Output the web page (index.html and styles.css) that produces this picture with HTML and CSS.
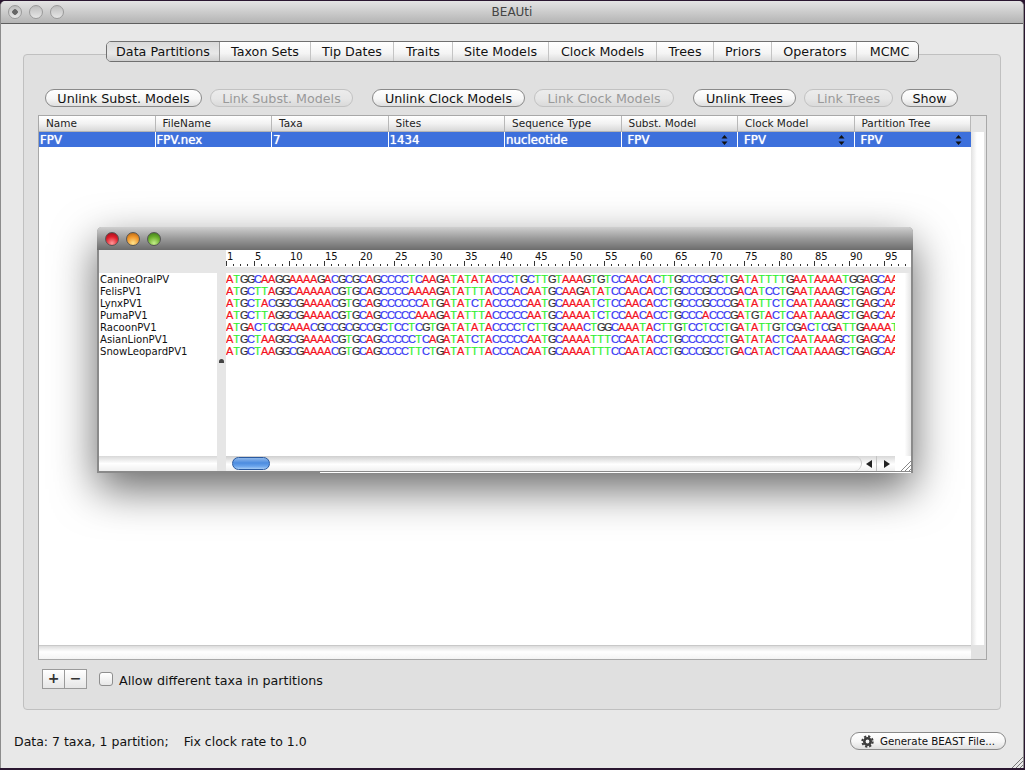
FILE: index.html

```html
<!DOCTYPE html>
<html lang="en">
<head>
  <meta charset="UTF-8" />
  <title>BEAUti</title>
  <link rel="stylesheet" href="styles.css">
</head>
<body>

  <div class="window">
    <div class="titlebar">
      <div class="lights">
        <span class="light light-close"></span>
        <span class="light"></span>
        <span class="light"></span>
      </div>
      <div class="title">BEAUti</div>
    </div>

    <div class="panel">
      <div class="tabs">
        <div class="tab tab-active tab-w1">Data Partitions</div>
        <div class="tab tab-w2">Taxon Sets</div>
        <div class="tab tab-w3">Tip Dates</div>
        <div class="tab tab-w4">Traits</div>
        <div class="tab tab-w5">Site Models</div>
        <div class="tab tab-w6">Clock Models</div>
        <div class="tab tab-w7">Trees</div>
        <div class="tab tab-w8">Priors</div>
        <div class="tab tab-w9">Operators</div>
        <div class="tab tab-w10">MCMC</div>
      </div>

      <div class="actions">
        <button class="btn btn-w1">Unlink Subst. Models</button>
        <button class="btn btn-off btn-w2">Link Subst. Models</button>
        <button class="btn btn-w3 group-start">Unlink Clock Models</button>
        <button class="btn btn-off btn-w4">Link Clock Models</button>
        <button class="btn btn-w5 group-start">Unlink Trees</button>
        <button class="btn btn-off btn-w6">Link Trees</button>
        <button class="btn btn-w7">Show</button>
      </div>

      <div class="table">
        <div class="table-list">
          <div class="table-head">
            <div class="th">Name</div>
            <div class="th">FileName</div>
            <div class="th">Taxa</div>
            <div class="th">Sites</div>
            <div class="th">Sequence Type</div>
            <div class="th">Subst. Model</div>
            <div class="th">Clock Model</div>
            <div class="th">Partition Tree</div>
          </div>
          <div class="table-row">
            <div class="td">FPV</div>
            <div class="td">FPV.nex</div>
            <div class="td">7</div>
            <div class="td">1434</div>
            <div class="td">nucleotide</div>
            <div class="td td-combo">FPV
              <svg class="stepper" width="7" height="12" viewBox="0 0 7 12"><path d="M3.5 1 L6.5 4.5 H0.5 Z M3.5 11 L0.5 7.5 H6.5 Z" fill="#111"/></svg>
            </div>
            <div class="td td-combo">FPV
              <svg class="stepper" width="7" height="12" viewBox="0 0 7 12"><path d="M3.5 1 L6.5 4.5 H0.5 Z M3.5 11 L0.5 7.5 H6.5 Z" fill="#111"/></svg>
            </div>
            <div class="td td-combo">FPV
              <svg class="stepper" width="7" height="12" viewBox="0 0 7 12"><path d="M3.5 1 L6.5 4.5 H0.5 Z M3.5 11 L0.5 7.5 H6.5 Z" fill="#111"/></svg>
            </div>
          </div>
        </div>
        <div class="table-vtrack"></div>
        <div class="table-htrack"></div>
        <div class="table-corner"></div>
      </div>

      <div class="table-tools">
        <div class="plus-minus">
          <div class="pm-btn">+</div>
          <div class="pm-btn">&minus;</div>
        </div>
        <span class="checkbox"></span>
        <span class="check-label">Allow different taxa in partitions</span>
      </div>
    </div>

    <div class="statusbar">
      <div class="status-text">Data: 7 taxa, 1 partition;<span class="status-gap">Fix clock rate to 1.0</span></div>
      <button class="btn btn-generate">
        <svg width="13" height="13" viewBox="0 0 13 13"><circle cx="6.5" cy="6.5" r="3.2" fill="none" stroke="#3c3c3c" stroke-width="2.6"/><circle cx="6.5" cy="6.5" r="5.2" fill="none" stroke="#3c3c3c" stroke-width="2" stroke-dasharray="2.2 1.88"/></svg>
        Generate BEAST File...
      </button>
    </div>
    <svg class="grip" width="12" height="12" viewBox="0 0 12 12"><path d="M12 1 L1 12 M12 5 L5 12 M12 9 L9 12" stroke="#777" fill="none"/></svg>
  </div>

  <div class="viewer">
    <div class="viewer-title">
      <span class="orb orb-red"></span>
      <span class="orb orb-amber"></span>
      <span class="orb orb-green"></span>
    </div>
    <div class="viewer-body">
      <div class="names-col">
        <div class="names">
          <div>CanineOralPV</div>
          <div>FelisPV1</div>
          <div>LynxPV1</div>
          <div>PumaPV1</div>
          <div>RacoonPV1</div>
          <div>AsianLionPV1</div>
          <div>SnowLeopardPV1</div>
        </div>
        <div class="names-foot"></div>
      </div>
      <div class="divider"><span class="divider-knob"></span></div>
      <div class="seq-col">
        <div class="ruler" id="ruler"></div>
        <div class="ruler-gap"></div>
        <div class="seq-area">
          <div class="seqs" id="seqs"></div>
          <div class="seq-vtrack"></div>
        </div>
        <div class="seq-foot">
          <div class="hscroll"><span class="thumb"></span></div>
          <div class="arrow-btn"><svg width="6" height="8" viewBox="0 0 6 8"><path d="M0 4 L6 0 V8 Z" fill="#222"/></svg></div>
          <div class="arrow-btn"><svg width="6" height="8" viewBox="0 0 6 8"><path d="M6 4 L0 0 V8 Z" fill="#222"/></svg></div>
          <div class="foot-corner">
            <svg width="11" height="11" viewBox="0 0 11 11"><path d="M11 1 L1 11 M11 5 L5 11 M11 9 L9 11" stroke="#888" fill="none"/></svg>
          </div>
        </div>
      </div>
    </div>
  </div>

  <script src="script.js"></script>
</body>
</html>
```

FILE: styles.css

```css
* {
  box-sizing: border-box;
}
html, body {
  margin: 0;
  height: 770px;
  overflow: hidden;
}
body {
  position: relative;
  background: #2a1630;
  font-family: 'DejaVu Sans', Verdana, sans-serif;
  color: #111;
}

/* main window */
.window {
  position: relative;
  width: 1024px;
  height: 767px;
  margin-top: 1px;
  background: #e8e8e8;
  border-left: 1px solid #8c8c8c;
  border-right: 1px solid #8c8c8c;
  border-radius: 5px 5px 0 0;
  display: flex;
  flex-direction: column;
}
.titlebar {
  height: 23px;
  flex: none;
  display: flex;
  align-items: center;
  background: linear-gradient(#e4e4e4, #b4b4b4);
  border-bottom: 1px solid #5e5e5e;
  border-radius: 5px 5px 0 0;
  padding-left: 7px;
}
.lights {
  display: flex;
  gap: 7px;
  width: 60px;
}
.light {
  width: 14px;
  height: 14px;
  border-radius: 50%;
  border: 1px solid #9a9a9a;
  background: linear-gradient(#bdbdbd, #e6e6e6);
}
.light-close {
  background: radial-gradient(circle, #666 0 2.5px, transparent 3px), linear-gradient(#bdbdbd, #e6e6e6);
}
.title {
  flex: 1;
  text-align: center;
  font-size: 12px;
  color: #444;
  padding-right: 67px;
}

/* tabbed panel */
.panel {
  margin: 30px 22px 0 22px;
  height: 656px;
  flex: none;
  background: #e0e0e0;
  border: 1px solid #c0c0c0;
  border-radius: 4px;
  padding: 0 13px 0 14px;
}
.tabs {
  display: flex;
  height: 21px;
  width: 813px;
  margin: -14px auto 0 auto;
  border: 1px solid #707070;
  border-radius: 5px;
  background: linear-gradient(#fff, #f4f4f4 60%, #dcdcdc);
  overflow: hidden;
}
.tab {
  font-size: 12.7px;
  line-height: 19px;
  text-align: center;
  border-right: 1px solid #c4c4c4;
}
.tab:last-child {
  border-right: none;
}
.tab-active {
  background: linear-gradient(#dadada, #e8e8e8 60%, #cfcfcf);
  border-right-color: #999;
}
.tab-w1 { width: 113px; }
.tab-w2 { width: 91px; }
.tab-w3 { width: 83px; }
.tab-w4 { width: 59px; }
.tab-w5 { width: 96px; }
.tab-w6 { width: 108px; }
.tab-w7 { width: 57px; }
.tab-w8 { width: 58px; padding-left: 1px; }
.tab-w9 { width: 85px; padding-left: 2px; }
.tab-w10 { width: 61px; padding-left: 4px; }

/* buttons */
.actions {
  display: flex;
  gap: 8px;
  margin: 27px 0 8px 7px;
}
.btn {
  height: 18px;
  padding: 0;
  font-family: inherit;
  font-size: 12.7px;
  line-height: 15px;
  color: #111;
  border: 1px solid #8a8a8a;
  border-radius: 9px;
  background: linear-gradient(#fff, #f6f6f6 55%, #dedede);
}
.btn-off {
  color: #999;
  border-color: #c2c2c2;
  background: linear-gradient(#ececec, #e6e6e6 55%, #dadada);
}
.group-start {
  margin-left: 11px;
}
.btn-w1 { width: 157px; }
.btn-w2 { width: 143px; }
.btn-w3 { width: 153px; }
.btn-w4 { width: 140px; margin-left: 1px; }
.btn-w5 { width: 103px; }
.btn-w6 { width: 89px; }
.btn-w7 { width: 57px; }

/* partitions table */
.table {
  height: 545px;
  border: 1px solid #a8a8a8;
  background: #e4e4e4;
  display: grid;
  grid-template-columns: 932px 1fr;
  grid-template-rows: 1fr 14px;
}
.table-list {
  background: #fff;
}
.table-head, .table-row {
  display: grid;
  grid-template-columns: repeat(8, 1fr);
}
.table-head {
  height: 16px;
  background: linear-gradient(#fff, #f2f2f2 50%, #d8d8d8);
  border-bottom: 1px solid #b4b4b4;
}
.th {
  font-size: 10.5px;
  line-height: 15px;
  padding-left: 7px;
  color: #222;
  border-right: 1px solid #b8b8b8;
}
.table-row {
  height: 15px;
  background: #3d70dc;
}
.td {
  position: relative;
  font-size: 11.8px;
  line-height: 17px;
  color: #fff;
  text-shadow: 0 0 1px #fff;
  padding-left: 1px;
  border-right: 1px solid #fff;
}
.td:last-child {
  border-right: none;
}
.td-combo {
  padding-left: 6px;
}
.stepper {
  position: absolute;
  right: 9px;
  top: 2px;
}
.table-vtrack {
  margin-top: 16px;
  margin-right: 2px;
  background: linear-gradient(90deg, #e2e2e2, #fff 45%, #fff);
}
.table-htrack {
  background: linear-gradient(#dcdcdc, #fff 45%, #f4f4f4);
  border-top: 1px solid #c8c8c8;
}
.table-corner {
  background: #e2e2e2;
}
.table-tools {
  display: flex;
  align-items: center;
  margin: 9px 0 0 4px;
}
.plus-minus {
  display: flex;
  width: 45px;
  height: 20px;
  border: 1px solid #9a9a9a;
  background: linear-gradient(#fff, #e6e6e6);
}
.pm-btn {
  flex: 1;
  text-align: center;
  font-size: 14px;
  font-weight: bold;
  line-height: 17px;
  color: #333;
}
.pm-btn:first-child {
  border-right: 1px solid #9a9a9a;
}
.checkbox {
  width: 14px;
  height: 14px;
  margin-left: 12px;
  border: 1px solid #8e8e8e;
  border-radius: 3px;
  background: linear-gradient(#fff, #e8e8e8);
}
.check-label {
  margin-left: 6px;
  padding-top: 2px;
  font-size: 12.7px;
}

/* status line */
.statusbar {
  display: flex;
  align-items: center;
  justify-content: space-between;
  margin-top: 22px;
  padding: 0 17px 0 13px;
}
.status-text {
  font-size: 12.5px;
}
.status-gap {
  margin-left: 15px;
}
.btn-generate {
  width: 156px;
  font-size: 10.3px;
  display: flex;
  align-items: center;
  justify-content: center;
  gap: 6px;
}
.grip {
  position: absolute;
  right: 0;
  bottom: 0;
}

/* floating alignment viewer */
.viewer {
  position: absolute;
  left: 97px;
  top: 227px;
  width: 816px;
  height: 246px;
  background: #e6e6e6;
  border: 2px solid #8a8a8a;
  border-top: none;
  border-radius: 5px 5px 0 0;
  box-shadow: 0 16px 44px rgba(0, 0, 0, 0.6);
}
.viewer::after {
  content: '';
  position: absolute;
  left: 221px;
  right: 0;
  bottom: -2px;
  height: 1px;
  background: #fff;
}
.viewer-title {
  height: 23px;
  margin: 0 -2px;
  padding-left: 8px;
  display: flex;
  align-items: center;
  gap: 7px;
  background: linear-gradient(#cfcfcf, #9a9a9a 50%, #6c6c6c);
  border-radius: 5px 5px 0 0;
}
.orb {
  width: 14px;
  height: 14px;
  border-radius: 50%;
  border: 1px solid #555;
}
.orb-red {
  background: radial-gradient(circle at 50% 85%, #ff9a9a, #e01e2a 55%, #8e0d18);
}
.orb-amber {
  background: radial-gradient(circle at 50% 85%, #ffe48e, #f0962a 55%, #a85c10);
}
.orb-green {
  background: radial-gradient(circle at 50% 85%, #c4ee8a, #6aae2c 55%, #38701a);
}
.viewer-body {
  display: flex;
  height: 221px;
}
.names-col {
  flex: none;
  width: 118px;
  display: flex;
  flex-direction: column;
  padding-top: 23px;
}
.names {
  flex: 1;
  background: #fff;
  padding: 1px 0 0 1px;
  font-size: 10.1px;
  line-height: 12px;
}
.names-foot {
  height: 15px;
  background: linear-gradient(#d8d8d8, #fff 50%, #f0f0f0);
}
.divider {
  flex: none;
  width: 9px;
  padding-top: 109px;
  padding-left: 2px;
}
.divider-knob {
  display: block;
  width: 5px;
  height: 4px;
  background: #444;
  border-radius: 3px 3px 0 0;
}
.seq-col {
  flex: none;
  width: 685px;
  display: flex;
  flex-direction: column;
}
.ruler {
  display: flex;
  height: 17px;
  background: #fff repeating-linear-gradient(90deg, #333 0 1px, transparent 1px 7px) 0 14px / 100% 2px no-repeat;
  overflow: hidden;
}
.ruler-mark {
  flex: none;
  width: 35px;
  font-size: 10px;
  line-height: 12px;
  padding: 1px 0 0 1px;
  background: linear-gradient(#333, #333) 0 11px / 1px 5px no-repeat;
}
.ruler-mark-first {
  width: 28px;
}
.ruler-gap {
  height: 6px;
}
.seq-area {
  flex: 1;
  display: flex;
}
.seqs {
  flex: none;
  width: 669px;
  background: #fff;
  overflow: hidden;
}
.seq-row {
  height: 12px;
  white-space: nowrap;
  font-family: 'Liberation Sans', Arial, sans-serif;
  font-size: 11px;
  line-height: 12px;
}
.base {
  display: inline-block;
  width: 7px;
  text-align: center;
  -webkit-text-stroke: 0.2px currentColor;
}
.base-A { color: #f5121e; }
.base-T { color: #30f030; }
.base-G { color: #333; }
.base-C { color: #3434f4; }
.seq-vtrack {
  flex: 1;
  background: linear-gradient(90deg, #fff, #fff 60%, #e4e4e4);
}
.seq-foot {
  height: 15px;
  display: flex;
  background: linear-gradient(#d8d8d8, #fff 55%, #f0f0f0);
}
.hscroll {
  width: 636px;
  height: 15px;
  padding: 1px 0 0 6px;
  background: linear-gradient(#cfcfcf, #fff 55%, #f0f0f0);
  border-radius: 0 8px 8px 0;
  border-right: 1px solid #c8c8c8;
}
.thumb {
  display: block;
  width: 38px;
  height: 13px;
  border: 1px solid #2a5aa0;
  border-radius: 7px;
  background: linear-gradient(#8fb8ea, #4c8ce0 45%, #6aa4ec 75%, #a6ccf4);
}
.arrow-btn {
  width: 15px;
  display: flex;
  align-items: center;
  justify-content: center;
  border-right: 1px solid #c4c4c4;
}
.arrow-btn + .arrow-btn {
  width: 18px;
  padding-left: 2px;
  border-right: none;
}
.foot-corner {
  flex: 1;
  display: flex;
  align-items: flex-end;
  justify-content: flex-end;
  background: #fff;
}
```

FILE: script.js

```js
const sequences = [
  'ATGGCAAGGAAAAGACGCGCAGCCCCTCAAGATATATACCCTGCTTGTAAAGTGTCCAACACTTGCCCCGCTGATATTTTGAATAAAATGGAGCAA',
  'ATGCTTAGGCAAAAACGTGCAGCCCCAAAAGATATTTACCCACAATGCAAGATATCCAACACCTGCCCGCCCGACATCCTGAATAAAGCTGAGCAA',
  'ATGCTACGGCGAAAACGTGCAGCCCCCCATGATATCTACCCCCAATGCAAAATCTCCAACACCTGCCCGCCCGATATTCTCAATAAAGCTGAGCAA',
  'ATGCTTAGGCGAAAACGTGCAGCCCCCAAAGATATTTACCCCCAATGCAAAATCTCCAACACCTGCCCACCCGATGTACTCAATAAAGCTGAGCAA',
  'ATGACTCGCAAACGCCGCGCCGCTCCTCGTGATATATACCCCTCTTGCAAACTGGCAAATACTTGTCCTCCTGATATTGTCGACTCGATTGAAAAT',
  'ATGCTAAGGCGAAAACGTGCAGCCCCCTCAGATATCTACCCCCAATGCAAAATTTCCAATACCTGCCCCCCTGATATACTCAATAAAGCTGAGCAA',
  'ATGCTAAGGCGAAAACGTGCAGCCCCTTCTGATATTTACCCACAATGCAAAATTTCCAATACCTGCCCGCCTGACATACTCAATAAAGCTGAGCAA',
];

const seqs = document.getElementById('seqs');
sequences.forEach(seq => {
  const row = document.createElement('div');
  row.className = 'seq-row';
  row.innerHTML = seq.split('').map(b => `<span class="base base-${b}">${b}</span>`).join('');
  seqs.appendChild(row);
});

const ruler = document.getElementById('ruler');
for (let n = 0; n <= 95; n += 5) {
  const mark = document.createElement('div');
  mark.className = n === 0 ? 'ruler-mark ruler-mark-first' : 'ruler-mark';
  mark.textContent = n === 0 ? '1' : n;
  ruler.appendChild(mark);
}
```
